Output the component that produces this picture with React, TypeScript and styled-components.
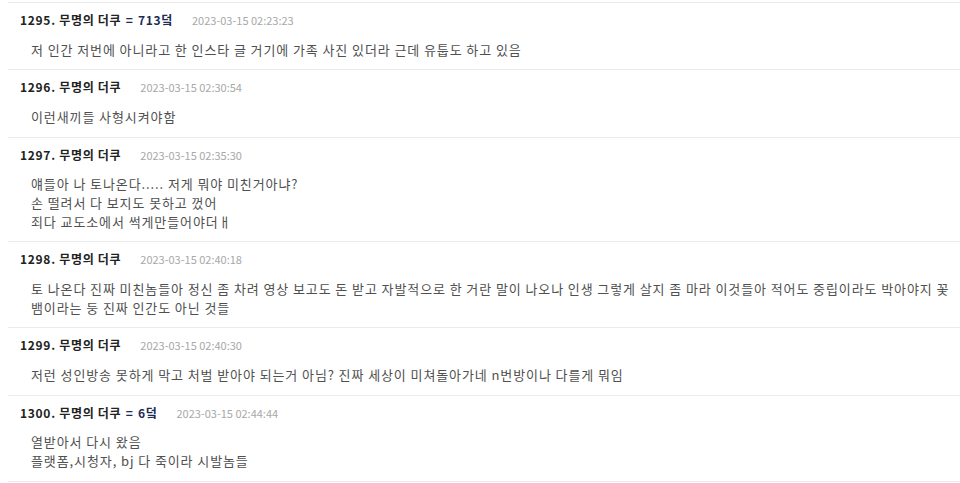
import React from 'react'
import styled, { createGlobalStyle } from 'styled-components'

const GlobalStyle = createGlobalStyle`
  html, body {
    margin: 0;
    padding: 0;
    background: #ffffff;
  }
  body {
    font-family: "Noto Sans CJK KR", "Noto Sans", sans-serif;
    overflow: hidden;
  }
`

const CommentList = styled.ul`
  list-style: none;
  margin: 0;
  padding: 2px 0 0 8px;
`

const CommentItem = styled.li`
  border-top: 1px solid #ebebeb;
  padding: 9px 6px 10.1px 12px;
  &:last-child {
    border-bottom: 1px solid #ebebeb;
  }
`

const CommentHead = styled.div`
  display: flex;
  align-items: center;
  height: 16px;
  gap: 19px;
`

const Author = styled.span`
  font-size: 12px;
  font-weight: 700;
  color: #222;
  line-height: 16px;
  letter-spacing: 0.7px;
`

const Duck = styled.span`
  color: #1c2c55;
  word-spacing: 1px;
`

const DateText = styled.span`
  font-size: 11px;
  color: #a8a8a8;
  line-height: 16px;
`

const Body = styled.div`
  margin-top: 12.5px;
  padding-left: 11px;
  font-size: 13px;
  line-height: 18.7px;
  letter-spacing: 0.9px;
  color: #505050;
  white-space: pre-line;
`

type Comment = {
  no: number
  duck?: number
  date: string
  text: string
}

const comments: Comment[] = [
  {
    no: 1295,
    duck: 713,
    date: '2023-03-15 02:23:23',
    text: '저 인간 저번에 아니라고 한 인스타 글 거기에 가족 사진 있더라 근데 유툽도 하고 있음',
  },
  { no: 1296, date: '2023-03-15 02:30:54', text: '이런새끼들 사형시켜야함' },
  {
    no: 1297,
    date: '2023-03-15 02:35:30',
    text: '얘들아 나 토나온다..... 저게 뭐야 미친거아냐?\n손 떨려서 다 보지도 못하고 껐어\n죄다 교도소에서 썩게만들어야더ㅐ',
  },
  {
    no: 1298,
    date: '2023-03-15 02:40:18',
    text: '토 나온다 진짜 미친놈들아 정신 좀 차려 영상 보고도 돈 받고 자발적으로 한 거란 말이 나오나 인생 그렇게 살지 좀 마라 이것들아 적어도 중립이라도 박아야지 꽃뱀이라는 둥 진짜 인간도 아닌 것들',
  },
  {
    no: 1299,
    date: '2023-03-15 02:40:30',
    text: '저런 성인방송 못하게 막고 처벌 받아야 되는거 아님? 진짜 세상이 미쳐돌아가네 n번방이나 다를게 뭐임',
  },
  {
    no: 1300,
    duck: 6,
    date: '2023-03-15 02:44:44',
    text: '열받아서 다시 왔음\n플랫폼,시청자, bj 다 죽이라 시발놈들',
  },
]

const App: React.FC = () => {
  return (
    <>
      <GlobalStyle />
      <CommentList>
        {comments.map((c) => (
          <CommentItem key={c.no}>
            <CommentHead>
              <Author>
                {c.no}. 무명의 더쿠
                {c.duck !== undefined && <Duck> = {c.duck}덬</Duck>}
              </Author>
              <DateText>{c.date}</DateText>
            </CommentHead>
            <Body>{c.text}</Body>
          </CommentItem>
        ))}
      </CommentList>
    </>
  )
}

export default App
